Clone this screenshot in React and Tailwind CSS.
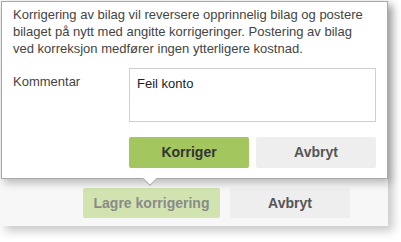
import React from 'react';

const font = { fontFamily: '"Liberation Sans", Arial, sans-serif' };

const App = () => {
  return (
    <div className="w-[401px] h-[242px] bg-white relative" style={font}>
      <div className="w-[388px] h-[226px] bg-[#f7f7f7] shadow-[5px_5px_9px_rgba(0,0,0,0.22)] flex items-end pb-[8px] pl-[83px] gap-[10px]">
        <button className="w-[137px] h-[30px] rounded-[2px] bg-[#d1e4b0] text-[#8a8a8a] font-bold text-[14px]">
          Lagre korrigering
        </button>
        <button className="w-[120px] h-[30px] rounded-[2px] bg-[#eeeeee] text-[#555] font-bold text-[14px]">
          Avbryt
        </button>
      </div>

      <div className="absolute left-[1px] top-[1px] w-[387px] h-[178px] bg-white border border-[#a8a8a8] shadow-[3px_4px_8px_rgba(0,0,0,0.25)] pl-[11px] pr-[11px] pt-[4px]">
        <p className="text-[13px] leading-[17px] text-[#444]">
          Korrigering av bilag vil reversere opprinnelig bilag og postere bilaget på nytt med angitte korrigeringer. Postering av bilag ved korreksjon medfører ingen ytterligere kostnad.
        </p>
        <div className="flex mt-[11px]">
          <label className="w-[116px] pt-[5px] text-[13px] leading-[17px] text-[#444]">Kommentar</label>
          <div className="flex-1 flex flex-col gap-[15px]">
            <div className="h-[54px] border border-[#cfcfcf] px-[7px] pt-[6px] text-[13px] leading-[17px] text-[#222]">
              Feil konto
            </div>
            <div className="flex gap-[7px]">
              <button className="w-[120px] h-[31px] rounded-[2px] bg-[#a3c65e] text-[#333] font-bold text-[14px]">
                Korriger
              </button>
              <button className="w-[120px] h-[31px] rounded-[2px] bg-[#eeeeee] text-[#555] font-bold text-[14px]">
                Avbryt
              </button>
            </div>
          </div>
        </div>
        <div className="absolute left-[143px] bottom-[-6px] w-[10px] h-[10px] bg-white border-r border-b border-[#a8a8a8] rotate-45"></div>
      </div>
    </div>
  );
};

export default App;
